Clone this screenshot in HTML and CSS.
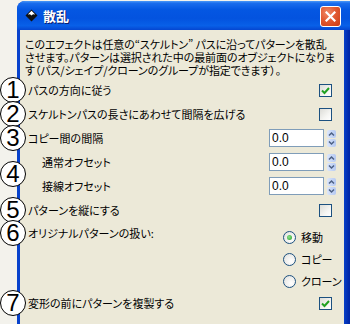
FILE: index.html
```html
<!DOCTYPE html>
<html lang="ja">
<head>
<meta charset="utf-8">
<title>散乱</title>
<link rel="stylesheet" href="styles.css">
</head>
<body>
<div class="screen">
  <div class="window">
    <div class="titlebar">
      <svg class="app-icon" width="13" height="13" viewBox="0 0 13 13">
        <polygon points="6.5,0.5 12.5,6.5 6.5,12.5 0.5,6.5" fill="#111"/>
        <polygon points="6.5,1.8 10.2,5.5 8,5.2 6.5,6.6 5,5.2 2.8,5.5" fill="#fff"/>
      </svg>
      <span class="title">散乱</span>
      <span class="close">
        <svg width="11" height="11" viewBox="0 0 11 11"><path d="M1.5 1.5 L9.5 9.5 M9.5 1.5 L1.5 9.5" stroke="#fff" stroke-width="2.2" stroke-linecap="square"/></svg>
      </span>
    </div>
    <div class="content">
      <p class="desc">このエフェクトは任意の“スケルトン” パスに沿ってパターンを散乱<br>させます。パターンは選択された中の最前面のオブジェクトになりま<br>す（パス/シェイプ/クローンのグループが指定できます）。</p>

      <div class="row">
        <span class="num">1</span>
        <span class="label">パスの方向に従う</span>
        <span class="check on"><svg width="9" height="9" viewBox="0 0 9 9"><path d="M1 4.5 L3.5 7 L8 2" fill="none" stroke="#21a121" stroke-width="2"/></svg></span>
      </div>

      <div class="row">
        <span class="num">2</span>
        <span class="label">スケルトンパスの長さにあわせて間隔を広げる</span>
        <span class="check"></span>
      </div>

      <div class="row">
        <span class="num">3</span>
        <span class="label">コピー間の間隔</span>
        <span class="spin"><span class="field">0.0</span><span class="arrows"><svg class="arr" width="9" height="8" viewBox="0 0 9 8"><path d="M2 5.5 L4.5 3 L7 5.5" fill="none" stroke="#4d6185" stroke-width="1.5"/></svg><svg class="arr" width="9" height="8" viewBox="0 0 9 8"><path d="M2 2.5 L4.5 5 L7 2.5" fill="none" stroke="#4d6185" stroke-width="1.5"/></svg></span></span>
      </div>

      <div class="group">
        <span class="num">4</span>
        <div class="row">
          <span class="label indent">通常オフセット</span>
          <span class="spin"><span class="field">0.0</span><span class="arrows"><svg class="arr" width="9" height="8" viewBox="0 0 9 8"><path d="M2 5.5 L4.5 3 L7 5.5" fill="none" stroke="#4d6185" stroke-width="1.5"/></svg><svg class="arr" width="9" height="8" viewBox="0 0 9 8"><path d="M2 2.5 L4.5 5 L7 2.5" fill="none" stroke="#4d6185" stroke-width="1.5"/></svg></span></span>
        </div>
        <div class="row">
          <span class="label indent">接線オフセット</span>
          <span class="spin"><span class="field">0.0</span><span class="arrows"><svg class="arr" width="9" height="8" viewBox="0 0 9 8"><path d="M2 5.5 L4.5 3 L7 5.5" fill="none" stroke="#4d6185" stroke-width="1.5"/></svg><svg class="arr" width="9" height="8" viewBox="0 0 9 8"><path d="M2 2.5 L4.5 5 L7 2.5" fill="none" stroke="#4d6185" stroke-width="1.5"/></svg></span></span>
        </div>
      </div>

      <div class="row">
        <span class="num">5</span>
        <span class="label">パターンを縦にする</span>
        <span class="check"></span>
      </div>

      <div class="row top">
        <span class="num num-top">6</span>
        <span class="label">オリジナルパターンの扱い:</span>
        <div class="radios">
          <div class="radio-item"><span class="radio on"></span><span>移動</span></div>
          <div class="radio-item"><span class="radio"></span><span>コピー</span></div>
          <div class="radio-item"><span class="radio"></span><span>クローン</span></div>
        </div>
      </div>

      <div class="row short">
        <span class="num">7</span>
        <span class="label">変形の前にパターンを複製する</span>
        <span class="check on"><svg width="9" height="9" viewBox="0 0 9 9"><path d="M1 4.5 L3.5 7 L8 2" fill="none" stroke="#21a121" stroke-width="2"/></svg></span>
      </div>
    </div>
  </div>
</div>
</body>
</html>
```

FILE: styles.css
```css
* { box-sizing: border-box; margin: 0; padding: 0; }

html, body {
  width: 350px;
  height: 324px;
  overflow: hidden;
}

body {
  background: #f3f2ec;
  font-family: "Noto Sans CJK JP", "Noto Sans", sans-serif;
  font-size: 11px;
  font-feature-settings: "palt";
  color: #000;
}

.screen {
  padding: 1px 0 0 17px;
}

.window {
  width: 340px;
  height: 323px;
  border-radius: 8px 8px 0 0;
  background: linear-gradient(to right, #0842cc 0, #0842cc 3px, #0a55dc 50%, #0840c8 calc(100% - 13px), #0027a8 calc(100% - 8px));
  display: flex;
  flex-direction: column;
  padding: 0 13px 0 3px;
}

.titlebar {
  height: 29px;
  flex: none;
  margin: 0 -13px 0 -3px;
  border-radius: 8px 8px 0 0;
  background: linear-gradient(to bottom, #4a98f8 0%, #1a6cec 8%, #0457e2 30%, #0353df 60%, #0860e8 85%, #0546d0 100%);
  display: flex;
  align-items: center;
  padding: 0 0 0 8px;
  color: #fff;
}

.app-icon { flex: none; }

.title {
  margin-left: 5px;
  font-weight: bold;
  font-size: 13px;
  text-shadow: 1px 1px 0 #0a1f70;
  flex: 1;
}

.close {
  width: 21px;
  height: 21px;
  margin-right: 16px;
  margin-top: 1px;
  border: 1px solid #fff;
  border-radius: 3px;
  background: radial-gradient(circle at 35% 30%, #f08a68 0%, #e25a32 45%, #c93a12 100%);
  display: flex;
  align-items: center;
  justify-content: center;
}

.content {
  flex: 1;
  background: #ece9d8;
  position: relative;
}

.desc {
  padding: 8px 0 0 5px;
  line-height: 13px;
  height: 48px;
  font-size: 11px;
  letter-spacing: -0.1px;
}

.row {
  position: relative;
  height: 24px;
  display: flex;
  align-items: center;
  padding: 0 12px 0 8px;
}

.row.top {
  height: 70px;
  align-items: flex-start;
}

.row.top .label { margin-top: 4px; line-height: 14px; }

.row.short { height: 22px; }

.group { position: relative; }

.label { flex: 1; white-space: nowrap; }
.label.indent { padding-left: 14px; }

.num {
  position: absolute;
  left: -20px;
  top: 50%;
  margin-top: -13px;
  width: 26px;
  height: 26px;
  border: 1.5px solid #000;
  border-radius: 50%;
  background: #fff;
  font-family: "Liberation Sans", Arial, sans-serif;
  font-size: 24px;
  line-height: 23px;
  text-align: center;
  z-index: 2;
}

.num.num-top { top: -2px; margin-top: 0; }

.check {
  width: 13px;
  height: 13px;
  border: 1px solid #1c5180;
  background: linear-gradient(135deg, #dcdcd7 0%, #f5f5f2 60%, #ffffff 100%);
  display: flex;
  align-items: center;
  justify-content: center;
}

.spin {
  display: flex;
  align-items: center;
  gap: 3px;
  margin-right: -4px;
}

.field {
  width: 55px;
  height: 18px;
  border: 1px solid #7f9db9;
  background: #fff;
  font-family: "Liberation Sans", Arial, sans-serif;
  font-size: 12px;
  line-height: 16px;
  padding-left: 2px;
}

.arrows {
  display: flex;
  flex-direction: column;
  gap: 1px;
}

.arr {
  display: block;
  border-radius: 2px;
  background: linear-gradient(to right, #dbe6fb, #b4c8f2);
}

.radios {
  width: 61px;
  margin-right: -12px;
  margin-top: 4px;
  display: flex;
  flex-direction: column;
}

.radio-item {
  height: 22px;
  display: flex;
  align-items: center;
  gap: 5px;
  white-space: nowrap;
}

.radio {
  width: 13px;
  height: 13px;
  border: 1px solid #1c5180;
  border-radius: 50%;
  background: radial-gradient(circle at 65% 65%, #ffffff 0%, #ececea 60%, #d6d6d0 100%);
  position: relative;
  flex: none;
}

.radio.on::after {
  content: "";
  position: absolute;
  left: 3px;
  top: 3px;
  width: 5px;
  height: 5px;
  border-radius: 50%;
  background: radial-gradient(circle at 40% 40%, #8ee18e, #21a121);
}
```
